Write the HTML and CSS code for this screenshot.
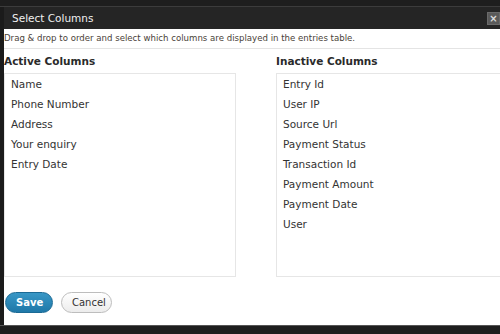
FILE: index.html
```html
<!DOCTYPE html>
<html lang="en">
<head>
  <meta charset="UTF-8" />
  <title>Select Columns</title>
  <link rel="stylesheet" href="styles.css">
</head>
<body>
  <div class="backdrop-top"></div>

  <div class="dialog">
    <div class="title-bar">
      <span class="title">Select Columns</span>
      <span class="close">&#215;</span>
    </div>

    <div class="dialog-body">
      <p class="intro">Drag &amp; drop to order and select which columns are displayed in the entries table.</p>

      <div class="columns">
        <div class="column">
          <h3>Active Columns</h3>
          <ul class="col-list">
            <li>Name</li>
            <li>Phone Number</li>
            <li>Address</li>
            <li>Your enquiry</li>
            <li>Entry Date</li>
          </ul>
        </div>
        <div class="column">
          <h3>Inactive Columns</h3>
          <ul class="col-list">
            <li>Entry Id</li>
            <li>User IP</li>
            <li>Source Url</li>
            <li>Payment Status</li>
            <li>Transaction Id</li>
            <li>Payment Amount</li>
            <li>Payment Date</li>
            <li>User</li>
          </ul>
        </div>
      </div>

      <div class="buttons">
        <button class="btn btn-save">Save</button>
        <button class="btn btn-cancel">Cancel</button>
      </div>
    </div>
  </div>

  <div class="backdrop-bottom"></div>
</body>
</html>
```

FILE: styles.css
```css
body {
  margin: 0;
  padding: 0;
  background: #1b1b1b;
  font-family: "DejaVu Sans", sans-serif;
  color: #333;
  overflow: hidden;
  height: 334px;
}
.backdrop-top {
  height: 6px;
  background: #1e1e1e;
  border-bottom: 1px solid #3c3c3c;
}
.dialog {
  margin-left: 4px;
  width: 520px;
}
.title-bar {
  height: 22px;
  background: #252525;
  display: flex;
  align-items: center;
  padding-left: 8px;
  position: relative;
}
.title {
  color: #f0f0f0;
  font-size: 10.5px;
}
.close {
  position: absolute;
  left: 483px;
  top: 5px;
  width: 11px;
  height: 11px;
  background: #5a5a5a;
  border: 1px solid #6a6a6a;
  color: #dcdcdc;
  font-size: 10px;
  font-weight: bold;
  line-height: 11px;
  text-align: center;
}
.dialog-body {
  background: #fff;
  height: 296px;
  display: flex;
  flex-direction: column;
}
.intro {
  margin: 0;
  padding: 4px 0 5px 0;
  font-size: 8.6px;
  line-height: 10px;
  color: #4a3f38;
  border-bottom: 1px solid #e4e4e4;
}
.columns {
  display: flex;
  gap: 40px;
}
.column {
  width: 232px;
}
.column h3 {
  margin: 0;
  padding: 6px 0 5px 0;
  font-size: 10.5px;
  line-height: 13px;
  font-weight: bold;
  color: #2a2a2a;
}
.col-list {
  list-style: none;
  margin: 0;
  padding: 0 0 0 6px;
  height: 202px;
  border: 1px solid #e6e6e6;
}
.col-list li {
  font-size: 10.5px;
  line-height: 20px;
  color: #333;
}
.buttons {
  display: flex;
  gap: 8px;
  padding: 15px 0 0 1px;
}
.btn {
  height: 21px;
  border-radius: 11px;
  font-family: "DejaVu Sans", sans-serif;
  font-size: 10px;
  padding: 0 10px;
  cursor: pointer;
}
.btn-save {
  width: 48px;
  background: linear-gradient(#3897c6, #1f78a8);
  border: 1px solid #1b6a95;
  color: #fff;
  font-weight: bold;
}
.btn-cancel {
  width: 51px;
  background: linear-gradient(#ffffff, #ececec);
  border: 1px solid #bdbdbd;
  color: #333;
}
.backdrop-bottom {
  height: 9px;
  background: #1e1e1e;
  border-top: 1px solid #555;
}
```
